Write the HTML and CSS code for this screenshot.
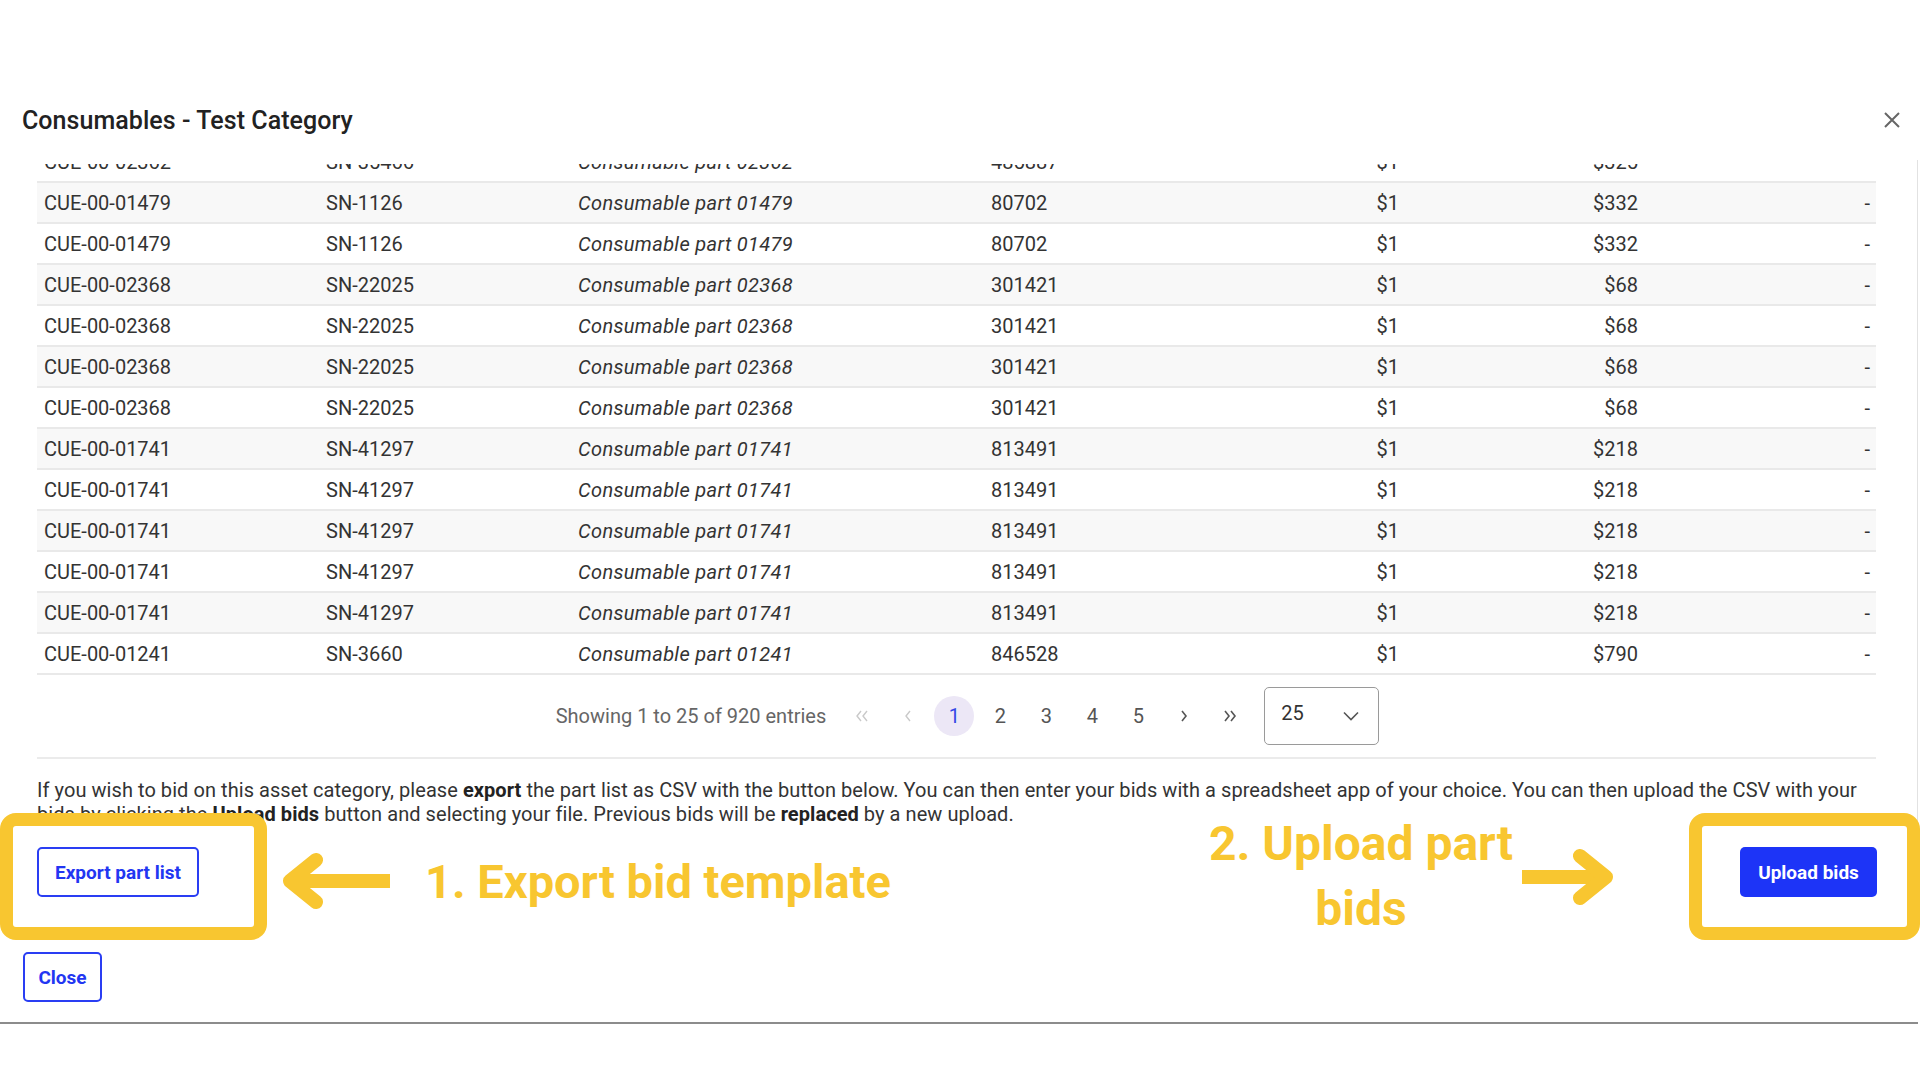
FILE: index.html
```html
<!DOCTYPE html>
<html lang="en">
<head>
  <meta charset="UTF-8">
  <meta name="viewport" content="width=device-width, initial-scale=1.0">
  <title>Consumables - Test Category</title>
  <link rel="stylesheet" href="styles.css">
</head>
<body>
  <div class="modal">
    <div class="modal-header">
      <h2 class="modal-title">Consumables - Test Category</h2>
      <button class="close-x" aria-label="Close">
        <svg width="18" height="18" viewBox="0 0 18 18"><path d="M2 2 L16 16 M16 2 L2 16" stroke="#666" stroke-width="2" fill="none"/></svg>
      </button>
    </div>

    <div class="modal-body">
      <div class="table-scroll">
        <table class="parts">
          <colgroup>
            <col style="width:282px"><col style="width:252px"><col style="width:413px"><col style="width:256px"><col style="width:166px"><col style="width:239px"><col style="width:231px">
          </colgroup>
          <tbody>
            <tr><td>CUE-00-02362</td><td>SN-35466</td><td class="desc">Consumable part 02362</td><td>485887</td><td class="num">$1</td><td class="num">$325</td><td class="num last">-</td></tr>
            <tr><td>CUE-00-01479</td><td>SN-1126</td><td class="desc">Consumable part 01479</td><td>80702</td><td class="num">$1</td><td class="num">$332</td><td class="num last">-</td></tr>
            <tr><td>CUE-00-01479</td><td>SN-1126</td><td class="desc">Consumable part 01479</td><td>80702</td><td class="num">$1</td><td class="num">$332</td><td class="num last">-</td></tr>
            <tr><td>CUE-00-02368</td><td>SN-22025</td><td class="desc">Consumable part 02368</td><td>301421</td><td class="num">$1</td><td class="num">$68</td><td class="num last">-</td></tr>
            <tr><td>CUE-00-02368</td><td>SN-22025</td><td class="desc">Consumable part 02368</td><td>301421</td><td class="num">$1</td><td class="num">$68</td><td class="num last">-</td></tr>
            <tr><td>CUE-00-02368</td><td>SN-22025</td><td class="desc">Consumable part 02368</td><td>301421</td><td class="num">$1</td><td class="num">$68</td><td class="num last">-</td></tr>
            <tr><td>CUE-00-02368</td><td>SN-22025</td><td class="desc">Consumable part 02368</td><td>301421</td><td class="num">$1</td><td class="num">$68</td><td class="num last">-</td></tr>
            <tr><td>CUE-00-01741</td><td>SN-41297</td><td class="desc">Consumable part 01741</td><td>813491</td><td class="num">$1</td><td class="num">$218</td><td class="num last">-</td></tr>
            <tr><td>CUE-00-01741</td><td>SN-41297</td><td class="desc">Consumable part 01741</td><td>813491</td><td class="num">$1</td><td class="num">$218</td><td class="num last">-</td></tr>
            <tr><td>CUE-00-01741</td><td>SN-41297</td><td class="desc">Consumable part 01741</td><td>813491</td><td class="num">$1</td><td class="num">$218</td><td class="num last">-</td></tr>
            <tr><td>CUE-00-01741</td><td>SN-41297</td><td class="desc">Consumable part 01741</td><td>813491</td><td class="num">$1</td><td class="num">$218</td><td class="num last">-</td></tr>
            <tr><td>CUE-00-01741</td><td>SN-41297</td><td class="desc">Consumable part 01741</td><td>813491</td><td class="num">$1</td><td class="num">$218</td><td class="num last">-</td></tr>
            <tr><td>CUE-00-01241</td><td>SN-3660</td><td class="desc">Consumable part 01241</td><td>846528</td><td class="num">$1</td><td class="num">$790</td><td class="num last">-</td></tr>
          </tbody>
        </table>
      </div>

      <div class="pagination">
        <span class="entries">Showing 1 to 25 of 920 entries</span>
        <div class="pager">
          <span class="page disabled">
            <svg width="16" height="20" viewBox="0 0 16 20"><path d="M7 5 L3 10 L7 15 M13 5 L9 10 L13 15" stroke="currentColor" stroke-width="1.4" fill="none"/></svg>
          </span>
          <span class="page disabled">
            <svg width="10" height="20" viewBox="0 0 10 20"><path d="M7 5 L3 10 L7 15" stroke="currentColor" stroke-width="1.4" fill="none"/></svg>
          </span>
          <span class="page active">1</span>
          <span class="page">2</span>
          <span class="page">3</span>
          <span class="page">4</span>
          <span class="page">5</span>
          <span class="page">
            <svg width="10" height="20" viewBox="0 0 10 20"><path d="M3 5 L7 10 L3 15" stroke="currentColor" stroke-width="1.6" fill="none"/></svg>
          </span>
          <span class="page">
            <svg width="16" height="20" viewBox="0 0 16 20"><path d="M3 5 L7 10 L3 15 M9 5 L13 10 L9 15" stroke="currentColor" stroke-width="1.6" fill="none"/></svg>
          </span>
        </div>
        <div class="page-size">
          <span>25</span>
          <svg width="16" height="10" viewBox="0 0 16 10"><path d="M1 1.5 L8 8.5 L15 1.5" stroke="#555" stroke-width="1.6" fill="none"/></svg>
        </div>
      </div>

      <p class="help">If you wish to bid on this asset category, please <b>export</b> the part list as CSV with the button below. You can then enter your bids with a spreadsheet app of your choice. You can then upload the CSV with your bids by clicking the <b>Upload bids</b> button and selecting your file. Previous bids will be <b>replaced</b> by a new upload.</p>

      <div class="actions">
        <button class="btn btn-outline">Export part list</button>
        <button class="btn btn-primary">Upload bids</button>
      </div>
    </div>

    <div class="modal-footer">
      <button class="btn btn-outline btn-close">Close</button>
    </div>
  </div>

  <!-- tutorial annotations drawn over the dialog -->
  <div class="note-box note-box-left"></div>
  <svg class="note-arrow note-arrow-left" width="112" height="58" viewBox="0 0 112 58">
    <path d="M36 8 L10 29 L36 50" stroke="#f8c630" stroke-width="14" stroke-linecap="round" stroke-linejoin="round" fill="none"/>
    <rect x="14" y="22" width="96" height="14" fill="#f8c630"/>
  </svg>
  <div class="note-text note-text-left">1. Export bid template</div>

  <div class="note-text note-text-right">2. Upload part<br>bids</div>
  <svg class="note-arrow note-arrow-right" width="96" height="58" viewBox="0 0 96 58">
    <rect x="2" y="22" width="80" height="14" fill="#f8c630"/>
    <path d="M60 8 L86 29 L60 50" stroke="#f8c630" stroke-width="14" stroke-linecap="round" stroke-linejoin="round" fill="none"/>
  </svg>
  <div class="note-box note-box-right"></div>
</body>
</html>
```

FILE: styles.css
```css
body {
  margin: 0;
  font-family: Roboto, "Liberation Sans", sans-serif;
  background-color: #fff;
  color: #333;
  overflow: hidden;
}

.modal {
  width: 1918px;
  margin-top: 80px;
  box-sizing: border-box;
  border-bottom: 2px solid #8c8c8c;
}

.modal-header {
  height: 80px;
  display: flex;
  align-items: center;
  justify-content: space-between;
  padding: 0 16px 0 22px;
}

.modal-title {
  margin: 0;
  font-size: 25px;
  font-weight: 500;
  line-height: 1;
  color: #222;
  letter-spacing: 0.05px;
}

.close-x {
  border: none;
  background: none;
  padding: 0;
  width: 20px;
  height: 20px;
  display: flex;
  align-items: center;
  justify-content: center;
  cursor: pointer;
}

.modal-body {
  padding: 4px 41px 0 37px;
  border-right: 1px solid #e2e2e2;
}

.table-scroll {
  height: 511px;
  overflow: hidden;
}

.parts {
  width: 1839px;
  margin-top: -22px;
  border-collapse: collapse;
  table-layout: fixed;
  font-size: 20px;
  color: #333;
}

.parts td {
  height: 39px;
  padding: 0 7px;
  border-bottom: 2px solid #e9e9e9;
  white-space: nowrap;
}

.parts tr:nth-child(even) td {
  background-color: #f8f8f8;
}

.parts .desc {
  font-style: italic;
  letter-spacing: 0.35px;
}

.parts .num {
  text-align: right;
}

.parts .last {
  padding-right: 6px;
}

.pagination {
  height: 82px;
  display: flex;
  align-items: center;
  justify-content: center;
  padding-left: 22px;
  border-bottom: 2px solid #ebebeb;
}

.entries {
  font-size: 20px;
  color: #666;
  margin-right: 16px;
}

.pager {
  display: flex;
  gap: 6px;
  margin-right: 14px;
}

.page {
  width: 40px;
  height: 40px;
  border-radius: 50%;
  display: flex;
  align-items: center;
  justify-content: center;
  font-size: 20px;
  color: #555;
}

.page.disabled {
  color: #c9c9c9;
}

.page.active {
  background-color: #ece7f6;
  color: #3548e6;
}

.page-size {
  width: 115px;
  height: 58px;
  box-sizing: border-box;
  border: 1.5px solid #9a9a9a;
  border-radius: 5px;
  display: flex;
  align-items: center;
  justify-content: space-between;
  padding: 0 19px 0 16px;
  font-size: 20px;
  color: #333;
}

.page-size span {
  margin-top: -6px;
}

.help {
  margin: 19px 0 0;
  font-size: 20px;
  line-height: 24px;
  color: #333;
  letter-spacing: 0.06px;
}

.help b {
  color: #222;
}

.actions {
  display: flex;
  justify-content: space-between;
  margin-top: 21px;
}

.btn {
  height: 50px;
  box-sizing: border-box;
  border-radius: 5px;
  font-family: Roboto, "Liberation Sans", sans-serif;
  font-size: 19px;
  font-weight: 700;
  cursor: pointer;
}

.btn-outline {
  width: 162px;
  background-color: #fff;
  color: #2236f2;
  border: 2px solid #2a3ef3;
}

.btn-primary {
  width: 137px;
  background-color: #1d34f7;
  color: #fff;
  border: none;
  margin-right: -1px;
}

.modal-footer {
  padding: 55px 0 20px 23px;
}

.btn-close {
  width: 79px;
}

/* annotations */
.note-box {
  position: absolute;
  top: 813px;
  height: 127px;
  box-sizing: border-box;
  border: 13px solid #f8c630;
  border-radius: 16px;
}

.note-box-left {
  left: 0;
  width: 267px;
}

.note-box-right {
  left: 1689px;
  width: 231px;
}

.note-arrow {
  position: absolute;
}

.note-arrow-left {
  left: 280px;
  top: 852px;
}

.note-arrow-right {
  left: 1520px;
  top: 848px;
}

.note-text {
  position: absolute;
  font-weight: 700;
  color: #f8c630;
  white-space: nowrap;
}

.note-text-left {
  left: 425px;
  top: 858px;
  font-size: 47px;
  line-height: 1;
}

.note-text-right {
  left: 1201px;
  top: 811px;
  width: 320px;
  font-size: 48px;
  text-align: center;
  line-height: 65px;
}
```
